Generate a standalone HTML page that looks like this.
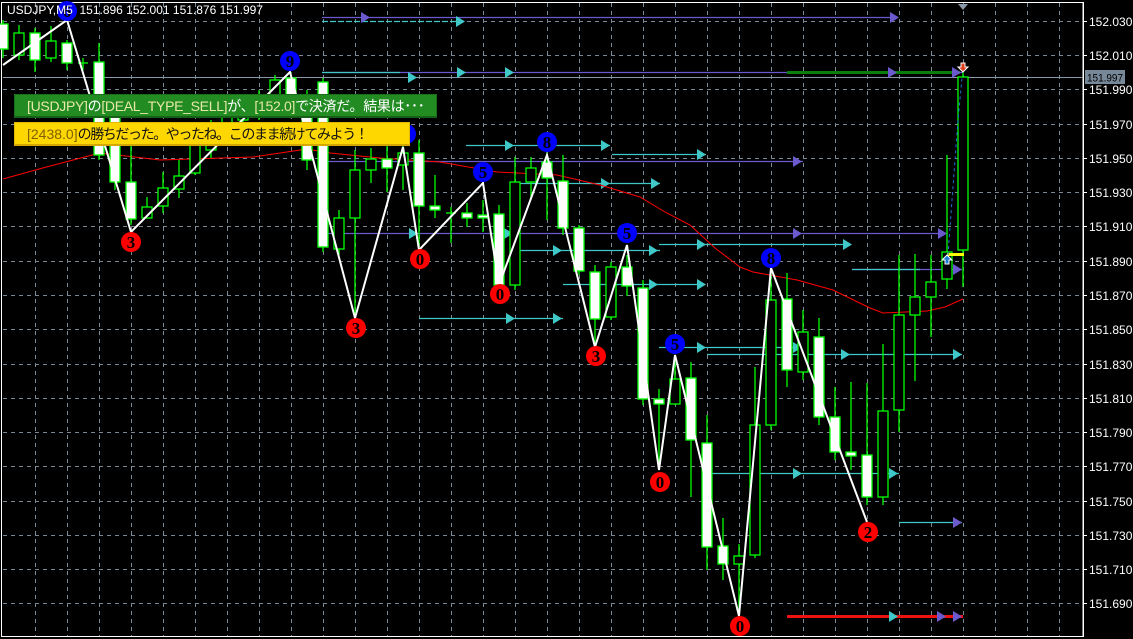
<!DOCTYPE html>
<html><head><meta charset="utf-8"><style>
html,body{margin:0;padding:0;background:#000;width:1133px;height:639px;overflow:hidden}
svg{display:block}
.ax{font-family:"Liberation Sans",sans-serif;font-size:12px;fill:#fff}
.lb{font-family:"Liberation Serif",serif;font-size:17px;font-weight:bold;fill:#000;text-anchor:middle}
.bn{position:absolute;font-family:"Liberation Sans","Noto Sans CJK JP",sans-serif;font-size:14px;line-height:22px;padding-left:12px;box-sizing:border-box;white-space:nowrap}
</style></head><body>
<div style="position:relative;width:1133px;height:639px">
<svg width="1133" height="639" xmlns="http://www.w3.org/2000/svg">
<rect width="1133" height="639" fill="#000"/>
<g id="grid" stroke="#7a8896" stroke-width="1" stroke-dasharray="4 4">
<line x1="3" y1="21.5" x2="1083" y2="21.5"/><line x1="3" y1="55.5" x2="1083" y2="55.5"/><line x1="3" y1="89.5" x2="1083" y2="89.5"/><line x1="3" y1="124.5" x2="1083" y2="124.5"/><line x1="3" y1="158.5" x2="1083" y2="158.5"/><line x1="3" y1="192.5" x2="1083" y2="192.5"/><line x1="3" y1="226.5" x2="1083" y2="226.5"/><line x1="3" y1="261.5" x2="1083" y2="261.5"/><line x1="3" y1="295.5" x2="1083" y2="295.5"/><line x1="3" y1="329.5" x2="1083" y2="329.5"/><line x1="3" y1="364.5" x2="1083" y2="364.5"/><line x1="3" y1="398.5" x2="1083" y2="398.5"/><line x1="3" y1="432.5" x2="1083" y2="432.5"/><line x1="3" y1="466.5" x2="1083" y2="466.5"/><line x1="3" y1="501.5" x2="1083" y2="501.5"/><line x1="3" y1="535.5" x2="1083" y2="535.5"/><line x1="3" y1="569.5" x2="1083" y2="569.5"/><line x1="3" y1="603.5" x2="1083" y2="603.5"/>
<line x1="35.5" y1="3" x2="35.5" y2="636"/><line x1="67.5" y1="3" x2="67.5" y2="636"/><line x1="99.5" y1="3" x2="99.5" y2="636"/><line x1="131.5" y1="3" x2="131.5" y2="636"/><line x1="163.5" y1="3" x2="163.5" y2="636"/><line x1="195.5" y1="3" x2="195.5" y2="636"/><line x1="227.5" y1="3" x2="227.5" y2="636"/><line x1="259.5" y1="3" x2="259.5" y2="636"/><line x1="291.5" y1="3" x2="291.5" y2="636"/><line x1="323.5" y1="3" x2="323.5" y2="636"/><line x1="355.5" y1="3" x2="355.5" y2="636"/><line x1="387.5" y1="3" x2="387.5" y2="636"/><line x1="419.5" y1="3" x2="419.5" y2="636"/><line x1="451.5" y1="3" x2="451.5" y2="636"/><line x1="483.5" y1="3" x2="483.5" y2="636"/><line x1="515.5" y1="3" x2="515.5" y2="636"/><line x1="547.5" y1="3" x2="547.5" y2="636"/><line x1="579.5" y1="3" x2="579.5" y2="636"/><line x1="611.5" y1="3" x2="611.5" y2="636"/><line x1="643.5" y1="3" x2="643.5" y2="636"/><line x1="675.5" y1="3" x2="675.5" y2="636"/><line x1="707.5" y1="3" x2="707.5" y2="636"/><line x1="739.5" y1="3" x2="739.5" y2="636"/><line x1="771.5" y1="3" x2="771.5" y2="636"/><line x1="803.5" y1="3" x2="803.5" y2="636"/><line x1="835.5" y1="3" x2="835.5" y2="636"/><line x1="867.5" y1="3" x2="867.5" y2="636"/><line x1="899.5" y1="3" x2="899.5" y2="636"/><line x1="931.5" y1="3" x2="931.5" y2="636"/><line x1="963.5" y1="3" x2="963.5" y2="636"/><line x1="995.5" y1="3" x2="995.5" y2="636"/><line x1="1027.5" y1="3" x2="1027.5" y2="636"/><line x1="1059.5" y1="3" x2="1059.5" y2="636"/>
</g>
<rect x="1.5" y="2.5" width="1081.5" height="634" fill="none" stroke="#fff" stroke-width="1"/>
<line x1="3" y1="77.5" x2="1083" y2="77.5" stroke="#8a98a8"/>
<g stroke-width="1.3">
<line x1="322" y1="17.5" x2="898" y2="17.5" stroke="#6a5acd"/>
<line x1="322" y1="21.5" x2="465" y2="21.5" stroke="#40c8c8" stroke-dasharray="6 2"/>
<line x1="322" y1="72.5" x2="963" y2="72.5" stroke="#6a5acd"/>
<line x1="322" y1="72.5" x2="400" y2="72.5" stroke="#40c8c8"/>
<line x1="466" y1="145.5" x2="610" y2="145.5" stroke="#40c8c8"/>
<line x1="612" y1="154.5" x2="706" y2="154.5" stroke="#40c8c8"/>
<line x1="323" y1="161.5" x2="803" y2="161.5" stroke="#6a5acd"/>
<line x1="515" y1="183.5" x2="660" y2="183.5" stroke="#40c8c8"/>
<line x1="323" y1="233.5" x2="945" y2="233.5" stroke="#6a5acd"/>
<line x1="659" y1="244.5" x2="850" y2="244.5" stroke="#40c8c8"/>
<line x1="515" y1="250.5" x2="660" y2="250.5" stroke="#40c8c8"/>
<line x1="852" y1="269.5" x2="962" y2="269.5" stroke="#6a5acd"/>
<line x1="852" y1="269.5" x2="920" y2="269.5" stroke="#40c8c8"/>
<line x1="563" y1="284.5" x2="705" y2="284.5" stroke="#40c8c8"/>
<line x1="419" y1="318.5" x2="563" y2="318.5" stroke="#40c8c8"/>
<line x1="659" y1="347.5" x2="802" y2="347.5" stroke="#40c8c8"/>
<line x1="707" y1="354.5" x2="962" y2="354.5" stroke="#40c8c8"/>
<line x1="707" y1="473.5" x2="899" y2="473.5" stroke="#40c8c8"/>
<line x1="899" y1="522.5" x2="962" y2="522.5" stroke="#40c8c8"/>
<line x1="787" y1="72.5" x2="960" y2="72.5" stroke="#0a7d0a" stroke-width="3"/>
<line x1="787" y1="616.5" x2="963" y2="616.5" stroke="#ee1111" stroke-width="3"/>
</g>
<g id="arrows">
<path d="M361 12l9 5.5-9 5.5z" fill="#6a5acd"/><path d="M890 12l9 5.5-9 5.5z" fill="#6a5acd"/>
<path d="M456 16l9 5.5-9 5.5z" fill="#40c8c8"/>
<path d="M457 67l9 5.5-9 5.5z" fill="#40c8c8"/><path d="M505 67l9 5.5-9 5.5z" fill="#40c8c8"/><path d="M888 67l9 5.5-9 5.5z" fill="#6a5acd"/><path d="M952 67l9 5.5-9 5.5z" fill="#6a5acd"/>
<path d="M408 72l9 5.5-9 5.5z" fill="#40c8c8"/>
<path d="M505 140l9 5.5-9 5.5z" fill="#40c8c8"/><path d="M601 140l9 5.5-9 5.5z" fill="#40c8c8"/>
<path d="M697 149l9 5.5-9 5.5z" fill="#40c8c8"/>
<path d="M793 156l9 5.5-9 5.5z" fill="#6a5acd"/>
<path d="M601 178l9 5.5-9 5.5z" fill="#40c8c8"/><path d="M651 178l9 5.5-9 5.5z" fill="#40c8c8"/>
<path d="M409 228l9 5.5-9 5.5z" fill="#40c8c8"/><path d="M504 228l9 5.5-9 5.5z" fill="#40c8c8"/><path d="M793 228l9 5.5-9 5.5z" fill="#6a5acd"/><path d="M938 228l9 5.5-9 5.5z" fill="#6a5acd"/>
<path d="M697 239l9 5.5-9 5.5z" fill="#40c8c8"/><path d="M843 239l9 5.5-9 5.5z" fill="#40c8c8"/>
<path d="M553 245l9 5.5-9 5.5z" fill="#40c8c8"/><path d="M649 245l9 5.5-9 5.5z" fill="#40c8c8"/>
<path d="M953 264l9 5.5-9 5.5z" fill="#6a5acd"/>
<path d="M649 279l9 5.5-9 5.5z" fill="#40c8c8"/><path d="M697 279l9 5.5-9 5.5z" fill="#40c8c8"/>
<path d="M506 313l9 5.5-9 5.5z" fill="#40c8c8"/><path d="M553 313l9 5.5-9 5.5z" fill="#40c8c8"/>
<path d="M697 342l9 5.5-9 5.5z" fill="#40c8c8"/><path d="M793 342l9 5.5-9 5.5z" fill="#40c8c8"/>
<path d="M841 349l9 5.5-9 5.5z" fill="#40c8c8"/><path d="M953 349l9 5.5-9 5.5z" fill="#40c8c8"/>
<path d="M793 468l9 5.5-9 5.5z" fill="#40c8c8"/><path d="M889 468l9 5.5-9 5.5z" fill="#40c8c8"/>
<path d="M953 517l9 5.5-9 5.5z" fill="#6a5acd"/>
<path d="M889 611l9 5.5-9 5.5z" fill="#40c8c8"/><path d="M937 611l9 5.5-9 5.5z" fill="#6a5acd"/><path d="M953 611l9 5.5-9 5.5z" fill="#6a5acd"/>
</g>
<polyline fill="none" stroke="#ff0000" stroke-width="1" points="3,179 50,166 100,153 160,160 253,157 307,149 330,153 380,158 440,162 497,172 557,175 600,185 640,197 665,212 690,225 715,248 740,267 753,272 797,280 833,290 870,308 883,313 927,311 945,307 963,299"/>
<g stroke="#00ff00" stroke-width="1.3">
<line x1="3" y1="20" x2="3" y2="58"/><rect x="-2" y="24" width="10" height="25" fill="#fff"/>
<line x1="19" y1="25" x2="19" y2="60"/><rect x="14" y="33" width="10" height="22" fill="#000"/>
<line x1="35" y1="28" x2="35" y2="72"/><rect x="30" y="33" width="10" height="27" fill="#fff"/>
<line x1="51" y1="26" x2="51" y2="62"/><rect x="46" y="41" width="10" height="17" fill="#000"/>
<line x1="67" y1="40" x2="67" y2="70"/><rect x="62" y="43" width="10" height="20" fill="#fff"/>
<line x1="83" y1="58" x2="83" y2="70"/><line x1="78" y1="63" x2="88" y2="63"/>
<line x1="99" y1="43" x2="99" y2="160"/><rect x="94" y="62" width="10" height="93" fill="#fff"/>
<line x1="115" y1="100" x2="115" y2="190"/><rect x="110" y="110" width="10" height="72" fill="#fff"/>
<line x1="131" y1="145" x2="131" y2="225"/><rect x="126" y="182" width="10" height="37" fill="#fff"/>
<line x1="147" y1="197" x2="147" y2="218"/><rect x="142" y="207" width="10" height="11" fill="#000"/>
<line x1="163" y1="172" x2="163" y2="213"/><rect x="158" y="188" width="10" height="18" fill="#000"/>
<line x1="179" y1="160" x2="179" y2="198"/><rect x="174" y="176" width="10" height="13" fill="#000"/>
<line x1="195" y1="138" x2="195" y2="175"/><rect x="190" y="145" width="10" height="28" fill="#000"/>
<line x1="211" y1="120" x2="211" y2="158"/><rect x="206" y="128" width="10" height="22" fill="#000"/>
<line x1="227" y1="110" x2="227" y2="145"/><rect x="222" y="115" width="10" height="20" fill="#000"/>
<line x1="243" y1="95" x2="243" y2="130"/><rect x="238" y="100" width="10" height="20" fill="#000"/>
<line x1="259" y1="90" x2="259" y2="120"/><rect x="254" y="95" width="10" height="15" fill="#000"/>
<line x1="275" y1="75" x2="275" y2="110"/><rect x="270" y="80" width="10" height="20" fill="#000"/>
<line x1="291" y1="72" x2="291" y2="110"/><rect x="286" y="78" width="10" height="17" fill="#fff"/>
<line x1="307" y1="90" x2="307" y2="170"/><rect x="302" y="100" width="10" height="60" fill="#fff"/>
<line x1="323" y1="78" x2="323" y2="252"/><rect x="318" y="82" width="10" height="165" fill="#fff"/>
<line x1="339" y1="210" x2="339" y2="255"/><rect x="334" y="218" width="10" height="31" fill="#000"/>
<line x1="355" y1="150" x2="355" y2="320"/><rect x="350" y="170" width="10" height="48" fill="#000"/>
<line x1="371" y1="148" x2="371" y2="183"/><rect x="366" y="159" width="10" height="11" fill="#000"/>
<line x1="387" y1="145" x2="387" y2="192"/><rect x="382" y="159" width="10" height="9" fill="#fff"/>
<line x1="403" y1="130" x2="403" y2="190"/><rect x="398" y="153" width="10" height="12" fill="#000"/>
<line x1="419" y1="140" x2="419" y2="247"/><rect x="414" y="153" width="10" height="53" fill="#fff"/>
<line x1="435" y1="175" x2="435" y2="218"/><rect x="430" y="206" width="10" height="4" fill="#fff"/>
<line x1="451" y1="207" x2="451" y2="243"/><line x1="446" y1="213" x2="456" y2="213"/>
<line x1="467" y1="203" x2="467" y2="227"/><rect x="462" y="213" width="10" height="5" fill="#fff"/>
<line x1="483" y1="200" x2="483" y2="232"/><rect x="478" y="215" width="10" height="3" fill="#fff"/>
<line x1="499" y1="205" x2="499" y2="290"/><rect x="494" y="214" width="10" height="71" fill="#fff"/>
<line x1="515" y1="157" x2="515" y2="290"/><rect x="510" y="182" width="10" height="103" fill="#000"/>
<line x1="531" y1="157" x2="531" y2="200"/><rect x="526" y="168" width="10" height="14" fill="#000"/>
<line x1="547" y1="150" x2="547" y2="220"/><rect x="542" y="162" width="10" height="16" fill="#fff"/>
<line x1="563" y1="155" x2="563" y2="235"/><rect x="558" y="181" width="10" height="47" fill="#fff"/>
<line x1="579" y1="225" x2="579" y2="275"/><rect x="574" y="228" width="10" height="43" fill="#fff"/>
<line x1="595" y1="265" x2="595" y2="347"/><rect x="590" y="272" width="10" height="47" fill="#fff"/>
<line x1="611" y1="262" x2="611" y2="320"/><rect x="606" y="267" width="10" height="50" fill="#000"/>
<line x1="627" y1="255" x2="627" y2="296"/><rect x="622" y="267" width="10" height="19" fill="#fff"/>
<line x1="643" y1="280" x2="643" y2="405"/><rect x="638" y="288" width="10" height="111" fill="#fff"/>
<line x1="659" y1="389" x2="659" y2="470"/><rect x="654" y="399" width="10" height="5" fill="#fff"/>
<line x1="675" y1="360" x2="675" y2="405"/><rect x="670" y="379" width="10" height="25" fill="#000"/>
<line x1="691" y1="362" x2="691" y2="497"/><rect x="686" y="378" width="10" height="62" fill="#fff"/>
<line x1="707" y1="415" x2="707" y2="570"/><rect x="702" y="443" width="10" height="104" fill="#fff"/>
<line x1="723" y1="518" x2="723" y2="580"/><rect x="718" y="546" width="10" height="18" fill="#fff"/>
<line x1="739" y1="544" x2="739" y2="615"/><rect x="734" y="556" width="10" height="8" fill="#000"/>
<line x1="755" y1="367" x2="755" y2="558"/><rect x="750" y="425" width="10" height="130" fill="#000"/>
<line x1="771" y1="255" x2="771" y2="430"/><rect x="766" y="300" width="10" height="125" fill="#000"/>
<line x1="787" y1="273" x2="787" y2="387"/><rect x="782" y="299" width="10" height="71" fill="#fff"/>
<line x1="803" y1="310" x2="803" y2="380"/><rect x="798" y="332" width="10" height="40" fill="#000"/>
<line x1="819" y1="318" x2="819" y2="425"/><rect x="814" y="337" width="10" height="80" fill="#fff"/>
<line x1="835" y1="387" x2="835" y2="460"/><rect x="830" y="417" width="10" height="35" fill="#fff"/>
<line x1="851" y1="382" x2="851" y2="470"/><rect x="846" y="452" width="10" height="4" fill="#fff"/>
<line x1="867" y1="383" x2="867" y2="505"/><rect x="862" y="455" width="10" height="42" fill="#fff"/>
<line x1="883" y1="344" x2="883" y2="505"/><rect x="878" y="411" width="10" height="86" fill="#000"/>
<line x1="899" y1="255" x2="899" y2="432"/><rect x="894" y="315" width="10" height="95" fill="#000"/>
<line x1="915" y1="254" x2="915" y2="381"/><rect x="910" y="297" width="10" height="18" fill="#000"/>
<line x1="931" y1="255" x2="931" y2="337"/><rect x="926" y="282" width="10" height="15" fill="#000"/>
<line x1="947" y1="155" x2="947" y2="289"/><rect x="942" y="252" width="10" height="27" fill="#000"/>
<line x1="963" y1="72" x2="963" y2="287"/><rect x="958" y="77" width="10" height="173" fill="#000"/>
</g>
<line x1="947" y1="254.5" x2="964" y2="254.5" stroke="#ffff00" stroke-width="3"/>
<polyline points="948,255 952,200 958,120 962,78" fill="none" stroke="#1e6fd0" stroke-dasharray="3 3"/>
<path d="M947 255l-5 5h3v4h4v-4h3z" fill="#1e7fd0" stroke="#fff" stroke-width="1"/>
<path d="M963 72l-5-5h3v-4h4v4h3z" fill="#e04020" stroke="#fff" stroke-width="1"/>
<path d="M958 4h10l-5 6z" fill="#8a98a8"/>
<polyline fill="none" stroke="#fff" stroke-width="2" points="3,65 67,20 131,232 290,72 355,318 403,147 419,250 483,183 499,285 547,155 595,347 627,245 659,470 675,355 739,616 771,268 867,522"/>
<g>
<circle cx="67" cy="11" r="10" fill="#0000ff"/><text class="lb" x="67" y="17">6</text>
<circle cx="131" cy="242" r="10" fill="#ff0000"/><text class="lb" x="131" y="248">3</text>
<circle cx="290" cy="61" r="10" fill="#0000ff"/><text class="lb" x="290" y="67">9</text>
<circle cx="356" cy="328" r="10" fill="#ff0000"/><text class="lb" x="356" y="334">3</text>
<circle cx="406" cy="134" r="10" fill="#0000ff"/>
<circle cx="420" cy="259" r="10" fill="#ff0000"/><text class="lb" x="420" y="265">0</text>
<circle cx="483" cy="172" r="10" fill="#0000ff"/><text class="lb" x="483" y="178">5</text>
<circle cx="500" cy="294" r="10" fill="#ff0000"/><text class="lb" x="500" y="300">0</text>
<circle cx="547" cy="142" r="10" fill="#0000ff"/><text class="lb" x="547" y="148">8</text>
<circle cx="596" cy="356" r="10" fill="#ff0000"/><text class="lb" x="596" y="362">3</text>
<circle cx="627" cy="233" r="10" fill="#0000ff"/><text class="lb" x="627" y="239">5</text>
<circle cx="660" cy="482" r="10" fill="#ff0000"/><text class="lb" x="660" y="488">0</text>
<circle cx="675" cy="344" r="10" fill="#0000ff"/><text class="lb" x="675" y="350">5</text>
<circle cx="740" cy="626" r="10" fill="#ff0000"/><text class="lb" x="740" y="632">0</text>
<circle cx="771" cy="258" r="10" fill="#0000ff"/><text class="lb" x="771" y="264">8</text>
<circle cx="868" cy="532" r="10" fill="#ff0000"/><text class="lb" x="868" y="538">2</text>
</g>
<text class="ax" x="7" y="14" style="font-size:12px" xml:space="preserve">USDJPY,M5  151.896 152.001 151.876 151.997</text>
<rect x="1084" y="0" width="49" height="639" fill="#000"/>
<line x1="1083.5" y1="2" x2="1083.5" y2="637" stroke="#fff"/>
<g stroke="#fff"><line x1="1083" y1="21.5" x2="1087" y2="21.5"/><line x1="1083" y1="55.5" x2="1087" y2="55.5"/><line x1="1083" y1="89.5" x2="1087" y2="89.5"/><line x1="1083" y1="124.5" x2="1087" y2="124.5"/><line x1="1083" y1="158.5" x2="1087" y2="158.5"/><line x1="1083" y1="192.5" x2="1087" y2="192.5"/><line x1="1083" y1="226.5" x2="1087" y2="226.5"/><line x1="1083" y1="261.5" x2="1087" y2="261.5"/><line x1="1083" y1="295.5" x2="1087" y2="295.5"/><line x1="1083" y1="329.5" x2="1087" y2="329.5"/><line x1="1083" y1="364.5" x2="1087" y2="364.5"/><line x1="1083" y1="398.5" x2="1087" y2="398.5"/><line x1="1083" y1="432.5" x2="1087" y2="432.5"/><line x1="1083" y1="466.5" x2="1087" y2="466.5"/><line x1="1083" y1="501.5" x2="1087" y2="501.5"/><line x1="1083" y1="535.5" x2="1087" y2="535.5"/><line x1="1083" y1="569.5" x2="1087" y2="569.5"/><line x1="1083" y1="603.5" x2="1087" y2="603.5"/></g>
<g class="ax">
<text x="1089" y="26">152.030</text><text x="1089" y="60">152.010</text><text x="1089" y="94">151.990</text><text x="1089" y="129">151.970</text><text x="1089" y="163">151.950</text><text x="1089" y="197">151.930</text><text x="1089" y="231">151.910</text><text x="1089" y="266">151.890</text><text x="1089" y="300">151.870</text><text x="1089" y="334">151.850</text><text x="1089" y="369">151.830</text><text x="1089" y="403">151.810</text><text x="1089" y="437">151.790</text><text x="1089" y="471">151.770</text><text x="1089" y="506">151.750</text><text x="1089" y="540">151.730</text><text x="1089" y="574">151.710</text><text x="1089" y="608">151.690</text>
</g>
<rect x="1085" y="70" width="40" height="14" fill="#778899"/>
<text x="1087" y="81.5" textLength="36" lengthAdjust="spacingAndGlyphs" style="font-family:'Liberation Sans',sans-serif;font-size:11px;fill:#000">151.997</text>
</svg>
<div class="bn" style="left:14px;top:94px;width:423px;height:24px;background:#228b22;border:1px solid #1a6e1a;border-bottom:2px solid #176017;color:#fff;letter-spacing:-0.3px"><span style="color:#e8e8a8">[USDJPY]</span>の<span style="color:#e8e8a8">[DEAL_TYPE_SELL]</span>が、<span style="color:#e8e8a8">[152.0]</span>で決済だ。結果は･･･</div>
<div class="bn" style="left:14px;top:122px;width:396px;height:24px;background:#ffd700;border:1px solid #e0b800;border-bottom:2px solid #d4a800;color:#111;letter-spacing:-1.4px"><span style="color:#806000;letter-spacing:0">[2438.0]</span>の勝ちだった。やったね。このまま続けてみよう！</div>
</div>
</body></html>
